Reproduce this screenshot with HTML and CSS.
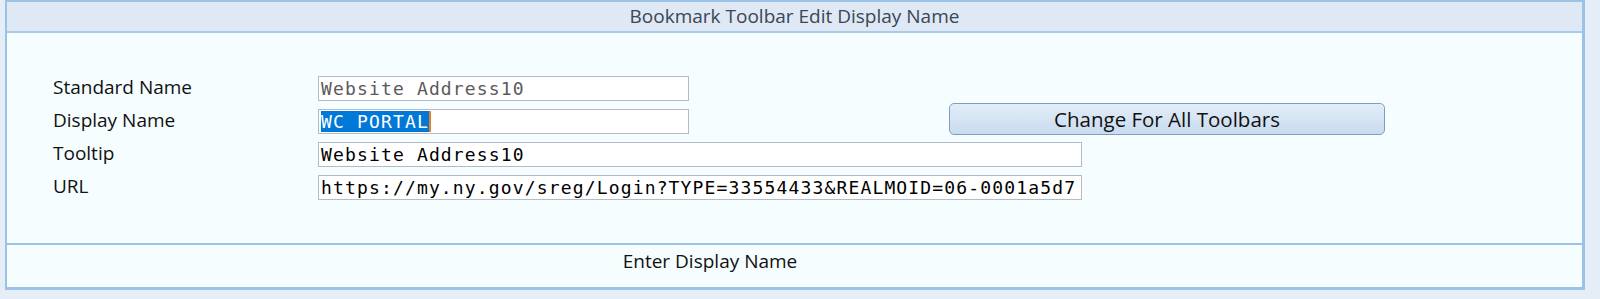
FILE: index.html
```html
<!DOCTYPE html>
<html lang="en">
<head>
    <meta charset="UTF-8">
    <meta name="viewport" content="width=device-width, initial-scale=1.0">
    <title>Bookmark Toolbar Edit Display Name</title>

    <link rel="stylesheet" href="styles.css">
</head>
<body>
    <div class="dialog">
        <div class="title"> Bookmark Toolbar Edit Display Name </div>

        <div class="content">
            <div class="row">
                <label class="label"> Standard Name </label>
                <div class="field short readonly">Website Address10</div>
            </div>
            <div class="row">
                <label class="label"> Display Name </label>
                <div class="field short"><span class="sel">WC PORTAL</span><span class="caret"></span></div>
                <button class="btn" type="button"> Change For All Toolbars </button>
            </div>
            <div class="row">
                <label class="label"> Tooltip </label>
                <div class="field long">Website Address10</div>
            </div>
            <div class="row">
                <label class="label"> URL </label>
                <div class="field long">https://my.ny.gov/sreg/Login?TYPE=33554433&amp;REALMOID=06-0001a5d7</div>
            </div>
        </div>

        <div class="status"> Enter Display Name </div>
    </div>
</body>
</html>
```

FILE: styles.css
```css
body {
    margin: 0;
    background: #e5edf7;
    font-family: "Open Sans", "Noto Sans", sans-serif;
}
.dialog {
    box-sizing: border-box;
    width: 1580px;
    height: 290px;
    margin-left: 5px;
    border: 2px solid #9cc2e5;
    border-right-width: 3px;
    border-bottom-width: 3px;
    background: #f5fdff;
    display: flex;
    flex-direction: column;
}
.title {
    height: 29px;
    line-height: 29px;
    background: #dee9f5;
    border-bottom: 2px solid #a9c9e9;
    text-align: center;
    font-size: 19px;
    color: #3b4656;
}
.content {
    flex: 1;
    padding: 43px 0 0 46px;
    display: flex;
    flex-direction: column;
    gap: 8px;
}
.row {
    display: flex;
    align-items: center;
}
.label {
    width: 265px;
    font-size: 19px;
    line-height: 20px;
    padding-bottom: 4px;
    color: #111;
}
.field {
    box-sizing: border-box;
    height: 25px;
    line-height: 23px;
    padding-left: 2px;
    background: #fff;
    border: 1px solid #b3bcc6;
    font-family: "DejaVu Sans Mono", monospace;
    font-size: 18px;
    letter-spacing: 1.15px;
    color: #000;
    white-space: nowrap;
    overflow: hidden;
    display: flex;
    align-items: center;
}
.field.short {
    width: 371px;
}
.field.long {
    width: 764px;
}
.field.readonly {
    color: #5a5a5a;
}
.sel {
    background: #0078d7;
    color: #fff;
    line-height: 21px;
}
.caret {
    width: 2px;
    height: 21px;
    background: #e8801f;
}
.btn {
    align-self: flex-start;
    margin: -6px 0 -1px 260px;
    width: 436px;
    height: 32px;
    border: 1px solid #7f9dc4;
    border-radius: 5px;
    background: linear-gradient(#e3edf8, #c9dbef);
    font-family: "Open Sans", "Noto Sans", sans-serif;
    font-size: 20.5px;
    color: #111;
    padding: 0;
}
.status {
    height: 42px;
    padding-right: 169px;
    border-top: 2px solid #9cc2e5;
    text-align: center;
    font-size: 19px;
    line-height: 32px;
    color: #111;
}
```
